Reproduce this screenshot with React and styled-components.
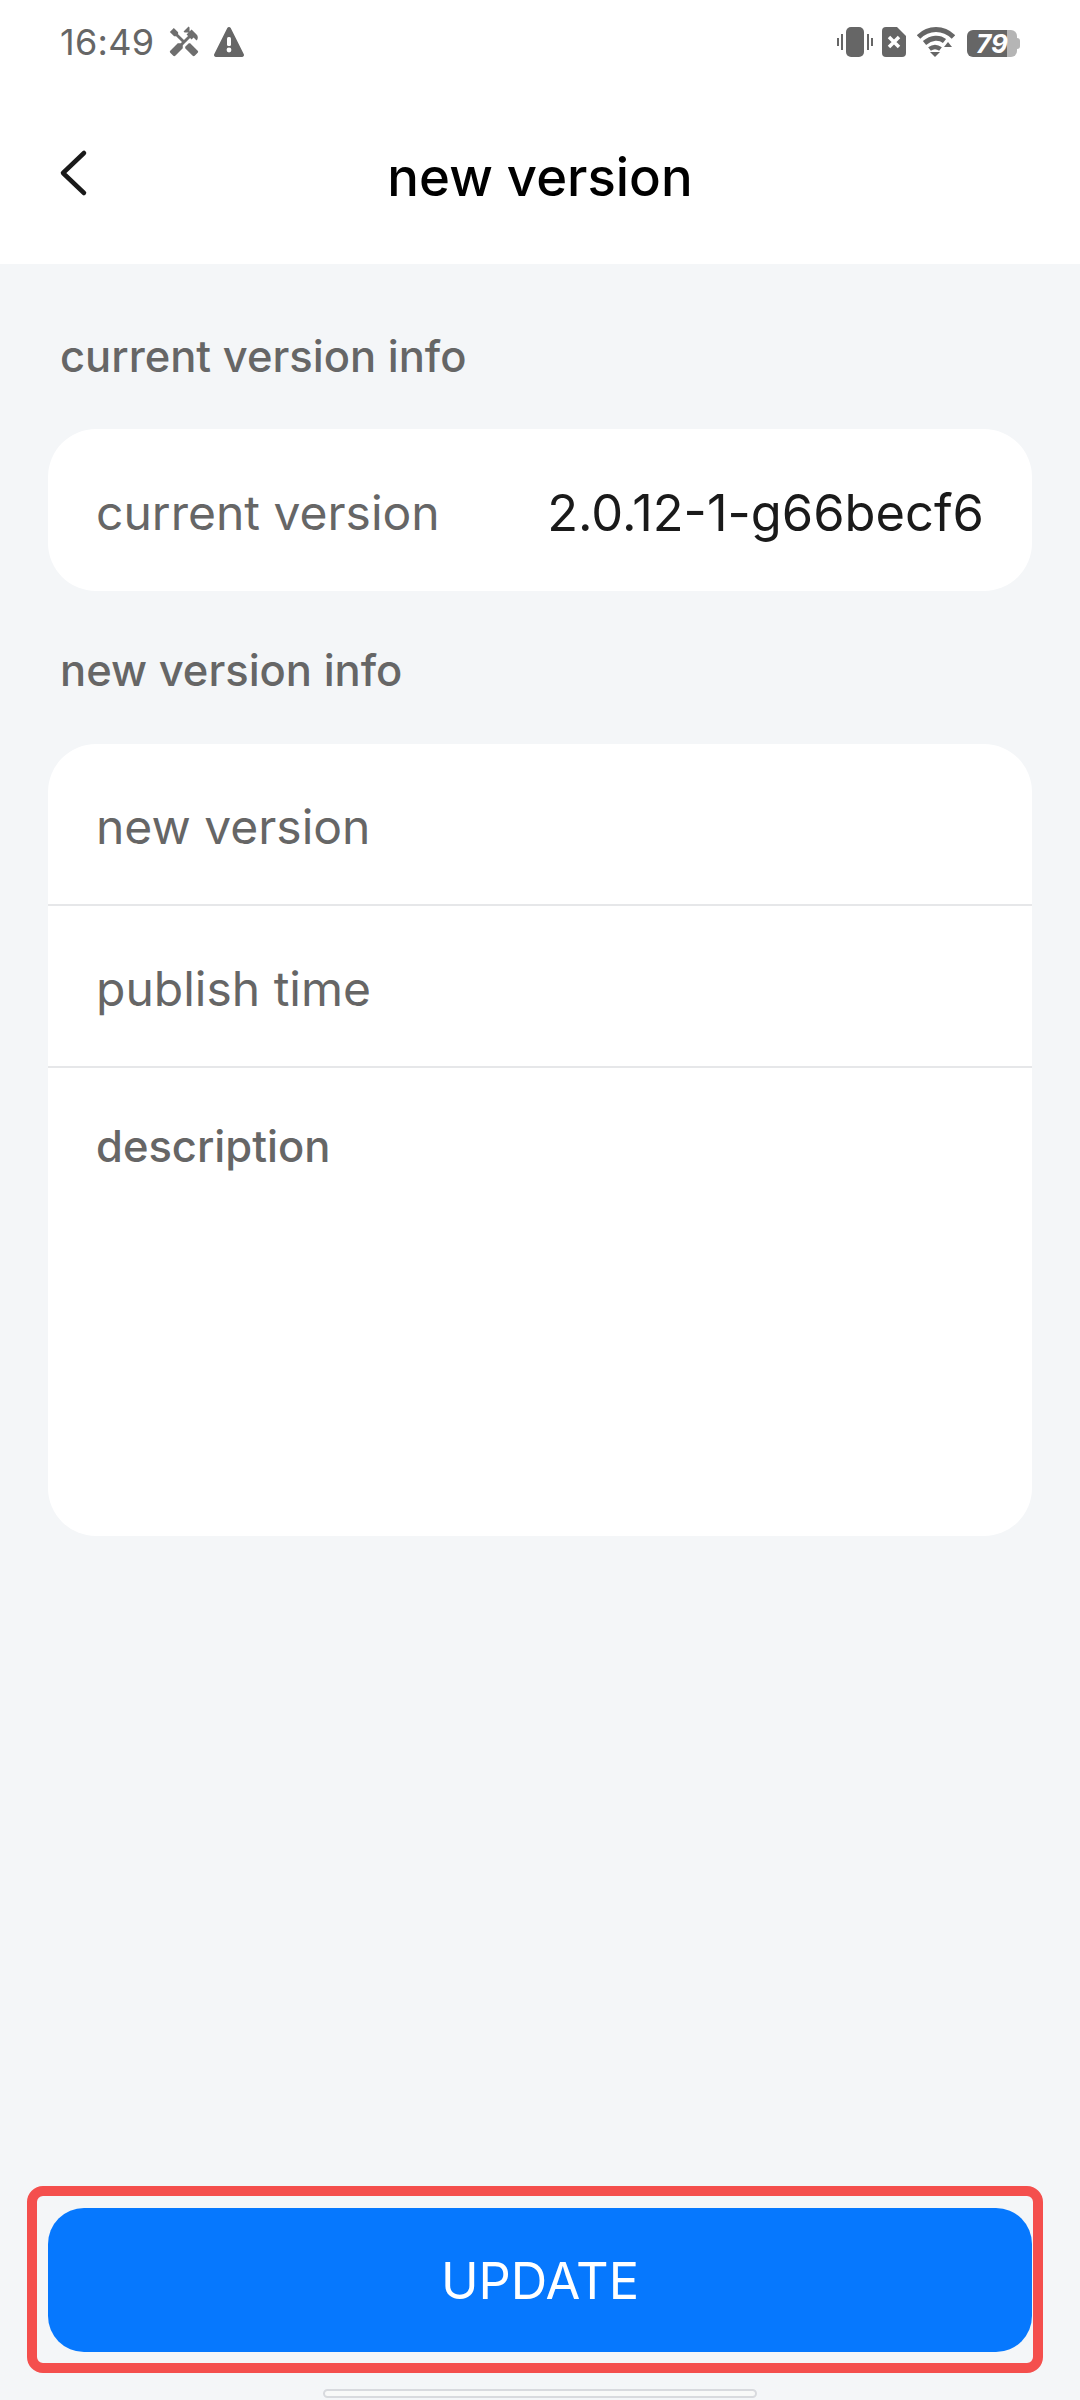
import styled, { createGlobalStyle } from "styled-components";
import { MdHandyman } from "react-icons/md";

const GlobalStyle = createGlobalStyle`
    html, body {
        margin: 0;
        padding: 0;
        background: #f4f6f8;
        font-family: Inter, "Noto Sans", sans-serif;
    }
`;

const Screen = styled.div`
    position: relative;
    width: 1080px;
    height: 2400px;
    display: flex;
    flex-direction: column;
    background: #f4f6f8;
    overflow: hidden;
`;

const Top = styled.header`
    height: 264px;
    background: #fff;
    display: flex;
    flex-direction: column;
    flex-shrink: 0;
`;

const StatusBar = styled.div`
    height: 84px;
    padding: 0 60px;
    display: flex;
    align-items: center;
    color: #666;
`;

const Time = styled.span`
    width: 94px;
    font-size: 36px;
    line-height: 84px;
    letter-spacing: 0.3px;
    margin-right: 13px;
    white-space: nowrap;
`;

const ToolsIcon = styled(MdHandyman)`
    display: block;
    font-size: 34px;
    color: #6e6e6e;
    margin-right: 13px;
`;

const StatusRight = styled.div`
    margin-left: auto;
    display: flex;
    align-items: center;
`;

const StatusIcon = styled.svg`
    display: block;
    margin-left: ${(p) => p.$ml || 0}px;
`;

const Battery = styled.div`
    position: relative;
    width: 50px;
    height: 27px;
    margin: 3px 3px 0 12px;
    border-radius: 6px;
    background: linear-gradient(90deg, #666 0 80%, #b5b5b5 80% 100%);
    color: #fff;
    font-size: 26px;
    line-height: 27px;
    font-weight: 700;
    font-style: italic;
    text-align: center;

    &::after {
        content: "";
        position: absolute;
        right: -3px;
        top: 8px;
        width: 3px;
        height: 11px;
        border-radius: 0 3px 3px 0;
        background: #b5b5b5;
    }
`;

const NavBar = styled.div`
    position: relative;
    flex: 1;
    display: flex;
    align-items: center;
    justify-content: center;
    padding-top: 6px;
`;

const BackButton = styled.svg`
    position: absolute;
    left: 58px;
    top: 65px;
`;

const Title = styled.h1`
    margin: 0;
    font-size: 52.700px;
    font-weight: 500;
    color: #000;
`;

const Body = styled.main`
    flex: 1;
    display: flex;
    flex-direction: column;
    padding: 0 48px;
`;

const SectionLabel = styled.div`
    box-sizing: border-box;
    height: ${(p) => p.$h}px;
    padding: ${(p) => p.$top}px 0 0 12px;
    display: flex;
    align-items: center;
    font-size: 43.500px;
    font-weight: 500;
    color: #666;
`;

const Card = styled.section`
    background: #fff;
    border-radius: 48px;
    overflow: hidden;
`;

const Row = styled.div`
    box-sizing: border-box;
    height: 162px;
    padding: 5px 48px 0;
    display: flex;
    align-items: center;
    justify-content: space-between;
    font-size: 48px;
    color: #666;
    border-bottom: ${(p) => (p.$divided ? "2px solid #e6e7e9" : "0")};
`;

const Value = styled.span`
    color: #1a1a1a;
    font-size: 50.600px;
`;

const DescriptionRow = styled.div`
    box-sizing: border-box;
    height: 468px;
    padding: 54px 48px 0;
    font-size: 43.500px;
    line-height: 48px;
    font-weight: 500;
    color: #666;
`;

const Spacer = styled.div`
    flex: 1;
`;

const Highlight = styled.div`
    margin: 0 -11px 27px -21px;
    padding: 12px 1px 11px 11px;
    border: 10px solid #f44f4d;
    border-radius: 16px;
`;

const UpdateButton = styled.button`
    display: block;
    width: 100%;
    height: 144px;
    border: 0;
    border-radius: 36px;
    background: #0678fe;
    color: #fff;
    font-family: inherit;
    font-size: 50.500px;
`;

const HomeBar = styled.div`
    position: absolute;
    left: 323px;
    top: 2389px;
    width: 434px;
    height: 9px;
    box-sizing: border-box;
    border: 2px solid #d8dade;
    border-radius: 5px;
    background: #f8f9f8;
`;

export default function App() {
    return (
        <>
            <GlobalStyle />
            <Screen>
                <Top>
                    <StatusBar>
                        <Time>16:49</Time>
                        <ToolsIcon />
                        <StatusIcon width="30" height="30" viewBox="0 0 30 30">
                            <path d="M15 0a2 2 0 0 1 1.700 1l13 26a2 2 0 0 1-1.700 3H2a2 2 0 0 1-1.700-3L13.300 1A2 2 0 0 1 15 0z" fill="#666" />
                            <rect x="13" y="10" width="4" height="9" rx="1.500" fill="#fff" />
                            <circle cx="15" cy="23" r="2.400" fill="#fff" />
                        </StatusIcon>
                        <StatusRight>
                            <StatusIcon width="36" height="30" viewBox="0 0 36 30">
                                <rect x="9" y="0" width="18" height="30" rx="5" fill="#666" />
                                <path d="M5 7v16M1 11v8M31 7v16M35 11v8" stroke="#666" strokeWidth="2" />
                            </StatusIcon>
                            <StatusIcon $ml={9} width="24" height="30" viewBox="0 0 24 30">
                                <path d="M4 0h11l9 9v17a4 4 0 0 1-4 4H4a4 4 0 0 1-4-4V4a4 4 0 0 1 4-4z" fill="#666" />
                                <path d="M7 10l10 10M17 10L7 20" stroke="#fff" strokeWidth="3.500" />
                            </StatusIcon>
                            <StatusIcon $ml={11} width="38" height="30" viewBox="0 0 38 30" fill="none">
                                <path d="M1.500 10c10-10 25-10 35 0" stroke="#666" strokeWidth="5" />
                                <path d="M7.500 16c7-6 15-6 20-2" stroke="#666" strokeWidth="5" />
                                <path d="M12.500 22c4-3 7-3 11 0" stroke="#666" strokeWidth="4.500" />
                                <path d="M13 25h10l-5 5z" fill="#666" />
                                <path d="M31 15l4 5h-8z" fill="#666" />
                            </StatusIcon>
                            <Battery>79</Battery>
                        </StatusRight>
                    </StatusBar>
                    <NavBar>
                        <BackButton width="30" height="48" viewBox="0 0 30 48" fill="none">
                            <path d="M26 4L5 24l21 20" stroke="#1a1a1a" strokeWidth="4.500" strokeLinecap="round" strokeLinejoin="round" />
                        </BackButton>
                        <Title>new version</Title>
                    </NavBar>
                </Top>
                <Body>
                    <SectionLabel $h={165} $top={18}>current version info</SectionLabel>
                    <Card>
                        <Row>
                            <span>current version</span>
                            <Value>2.0.12-1-g66becf6</Value>
                        </Row>
                    </Card>
                    <SectionLabel $h={153} $top={5}>new version info</SectionLabel>
                    <Card>
                        <Row $divided>new version</Row>
                        <Row $divided>publish time</Row>
                        <DescriptionRow>description</DescriptionRow>
                    </Card>
                    <Spacer />
                    <Highlight>
                        <UpdateButton>UPDATE</UpdateButton>
                    </Highlight>
                </Body>
                <HomeBar />
            </Screen>
        </>
    );
}
